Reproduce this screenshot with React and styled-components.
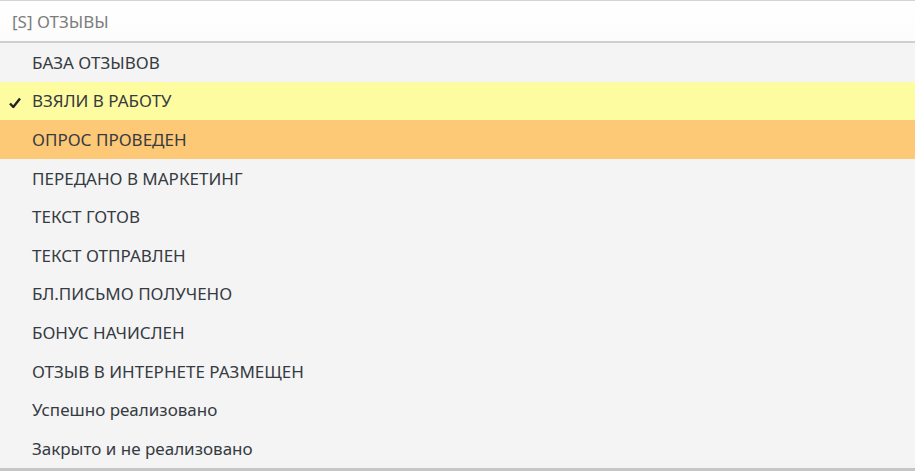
import React from 'react'
import styled, { createGlobalStyle } from 'styled-components'

const Global = createGlobalStyle`
  html, body { margin: 0; padding: 0; background: #f4f4f4; }
  body { font-family: "Noto Sans", "Open Sans", sans-serif; }
`

const Panel = styled.div`
  width: 915px;
  height: 471px;
  display: flex;
  flex-direction: column;
  border-top: 1px solid #d4d4d4;
  border-bottom: 3px solid #c6c6c6;
  box-sizing: border-box;
  background: #f4f4f4;
  overflow: hidden;
`

const Header = styled.div`
  height: 42px;
  display: flex;
  align-items: center;
  padding-left: 12px;
  background: linear-gradient(#ffffff, #fcfcfc);
  border-bottom: 2px solid #cfcfcf;
  color: #7d7d7d;
  font-size: 17px;
  box-sizing: border-box;
  flex-shrink: 0;
`

const List = styled.ul`
  list-style: none;
  margin: 0;
  padding: 0;
  display: flex;
  flex-direction: column;
`

const Item = styled.li`
  height: 38.6px;
  display: flex;
  align-items: center;
  position: relative;
  padding-left: 32px;
  font-size: 17px;
  color: #363b42;
  background: ${p => (p.$tone === 'checked' ? '#fefca0' : p.$tone === 'hover' ? '#fec976' : 'transparent')};
`

const Check = styled.svg`
  position: absolute;
  left: 9px;
  top: 50%;
  width: 12px;
  height: 12px;
  margin-top: -4px;
`

const items = [
  'БАЗА ОТЗЫВОВ',
  'ВЗЯЛИ В РАБОТУ',
  'ОПРОС ПРОВЕДЕН',
  'ПЕРЕДАНО В МАРКЕТИНГ',
  'ТЕКСТ ГОТОВ',
  'ТЕКСТ ОТПРАВЛЕН',
  'БЛ.ПИСЬМО ПОЛУЧЕНО',
  'БОНУС НАЧИСЛЕН',
  'ОТЗЫВ В ИНТЕРНЕТЕ РАЗМЕЩЕН',
  'Успешно реализовано',
  'Закрыто и не реализовано',
]

export default function App() {
  return (
    <>
      <Global />
      <Panel>
        <Header>[S] ОТЗЫВЫ</Header>
        <List>
          {items.map((text, i) => (
            <Item key={text} $tone={i === 1 ? 'checked' : i === 2 ? 'hover' : ''}>
              {i === 1 && (
                <Check viewBox="0 0 12 12">
                  <path d="M1 6.5 L4.3 10 L11 1.5" fill="none" stroke="#222" strokeWidth="2.4" strokeLinejoin="round" />
                </Check>
              )}
              {text}
            </Item>
          ))}
        </List>
      </Panel>
    </>
  )
}
